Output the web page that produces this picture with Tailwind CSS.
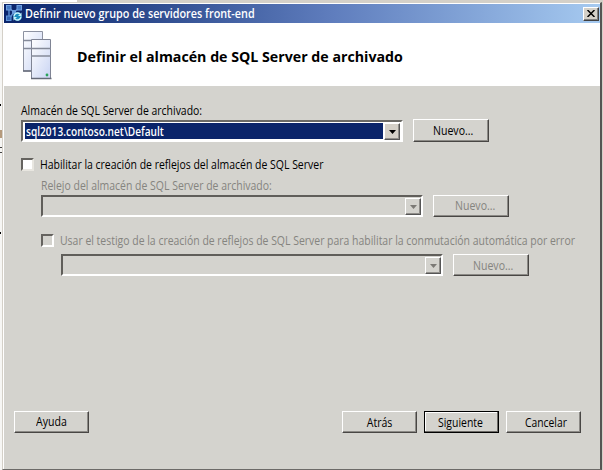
<!DOCTYPE html>
<html lang="es">
<head>
<meta charset="utf-8">
<title>Definir nuevo grupo de servidores front-end</title>
<script src="https://cdn.jsdelivr.net/npm/@tailwindcss/browser@4"></script>
</head>
<body class="w-[603px] h-[470px] overflow-hidden bg-[#d4d0c8] font-['Open_Sans','Noto_Sans',sans-serif] text-[12px] leading-[16px] text-black">
<div class="relative flex w-[603px] h-[470px]">
  <!-- sliver of the window behind -->
  <div class="w-[2px] shrink-0 bg-[#f6f6f4] flex flex-col">
    <div class="mt-[104px] h-[2px] w-px bg-black"></div>
    <div class="mt-[24px] h-[8px] bg-[#b59a7c]"></div>
    <div class="mt-[9px] h-px bg-[#444]"></div>
    <div class="mt-[4px] h-px bg-[#444]"></div>
    <div class="mt-[79px] h-[2px] w-px bg-black"></div>
  </div>
  <div class="absolute left-0 top-0 h-[2px] w-[77px] bg-white"></div>

  <main class="mt-[2px] w-[600px] h-[468px] border-l border-t border-[#d4d0c8] border-r-2 border-r-[#555553] border-b border-b-[#6c6a68] bg-[#d4d3ce] flex flex-col">
    <div class="grow border-l border-t border-white flex flex-col">
      <header class="h-[19px] flex items-center bg-linear-to-r from-[#0a246a] via-[#5f7dbd] via-55% to-[#a6caf0]">
        <svg class="ml-[2px] w-[16px] h-[17px]" viewBox="0 0 16 17">
          <path d="M3 3L8 7L13 3M3 3V14M3 14L8 7" stroke="#5c8fd2" stroke-width="1.400" fill="none"/>
          <rect x=".5" y=".5" width="4.500" height="4.500" fill="#467ac4" stroke="#6e9fdf"/>
          <rect x="11" y=".5" width="4.500" height="4.500" fill="#467ac4" stroke="#6e9fdf"/>
          <rect x=".5" y="11" width="4.500" height="4.500" fill="#3566b2" stroke="#5f93d8"/>
          <rect x="6" y="5" width="4" height="4" fill="#6b9cdc"/>
          <circle cx="11.500" cy="11.500" r="4.300" fill="#1b8fc0"/>
          <path d="M8 11.500A3.500 3.500 0 0 1 14 9M15 11.500A3.500 3.500 0 0 1 9 14" stroke="#c5f2fb" stroke-width="1.500" fill="none"/>
          <path d="M15.500 7.500V11H12ZM7.500 15.500V12H11Z" fill="#c5f2fb"/>
        </svg>
        <h1 class="ml-[3px] grow font-semibold text-white whitespace-nowrap"><span class="inline-block origin-left scale-x-[0.9]">Definir nuevo grupo de servidores front-end</span></h1>
        <button class="mr-[1px] w-[16px] h-[14px] flex items-center justify-center bg-[#d4d0c8] border border-t-white border-l-white border-r-[#404040] border-b-[#404040] shadow-[inset_-1px_-1px_#808080]" aria-label="Cerrar">
          <svg class="w-[8px] h-[7px]" viewBox="0 0 8 7"><path d="M.5 0L7.500 7M7.500 0L.5 7" stroke="#000" stroke-width="1.500"/></svg>
        </button>
      </header>

      <section class="h-[63px] flex items-start bg-white">
        <svg class="ml-[18px] mt-[7px] w-[31px] h-[50px]" viewBox="0 0 31 50">
          <defs><linearGradient id="g" x2="1" y2="1"><stop stop-color="#fff"/><stop offset="1" stop-color="#c9d4f3"/></linearGradient></defs>
          <path d="M1.500 1.500H20.500V41H1.500Z" fill="url(#g)" stroke="#8d92a1"/>
          <path d="M1 10.500H21M1 18.500H21" stroke="#858a99" stroke-width="1.300"/>
          <path d="M1 41H10" stroke="#656a78" stroke-width="1.500"/>
          <path d="M9.500 9.500H28.500V48.500H9.500Z" fill="url(#g)" stroke="#7f8494"/>
          <path d="M9 18.500H29M9 26H29" stroke="#858a99" stroke-width="1.500"/>
          <path d="M9 48.500H29.500" stroke="#656a78" stroke-width="1.500"/>
          <circle cx="25" cy="45" r="1.400" fill="#2aa35a"/>
        </svg>
        <h2 class="ml-[24px] mt-[21px] text-[15px] leading-[24px] font-bold whitespace-nowrap"><span class="inline-block origin-left scale-x-[0.947]">Definir el almacén de SQL Server de archivado</span></h2>
      </section>

      <section class="grow flex flex-col items-start pl-[17px] pt-[16px]">
        <label class="whitespace-nowrap"><span class="inline-block origin-left scale-x-[0.87] translate-y-px">Almacén de SQL Server de archivado:</span></label>
        <div class="mt-[1px] flex items-start">
          <div class="mt-[1px] w-[382px] h-[22px] flex border-2 border-t-[#6b6a66] border-l-[#6b6a66] border-b-white border-r-white bg-white p-[1px]">
            <div class="ml-[1px] w-[358px] h-[16px] bg-[#0a246a] text-white font-semibold leading-[17px] pl-px whitespace-nowrap"><span class="inline-block origin-left scale-x-[0.843]">sql2013.contoso.net\Default</span></div>
            <div class="ml-[1px] w-[16px] h-[17px] flex items-center justify-center bg-[#d4d0c8] border border-t-white border-l-white border-r-[#555] border-b-[#555] shadow-[inset_-1px_-1px_#908e8a]"><svg class="w-[7px] h-[4px]" viewBox="0 0 7 4"><path d="M0 0H7L3.500 4Z"/></svg></div>
          </div>
          <button class="ml-[10px] w-[76px] h-[23px] flex items-center pl-[19px] border border-t-white border-l-white border-r-[#484644] border-b-[#484644] shadow-[inset_-1px_-1px_#8c8a86]"><span class="inline-block origin-left scale-x-[0.88]">Nuevo...</span></button>
        </div>
        <div class="mt-[14px] flex items-center">
          <div class="w-[13px] h-[13px] bg-white border-2 border-t-[#65635f] border-l-[#65635f] border-b-[#e8e6e0] border-r-[#e8e6e0]"></div>
          <span class="ml-[6px] whitespace-nowrap inline-block origin-left scale-x-[0.872] translate-y-px">Habilitar la creación de reflejos del almacén de SQL Server</span>
        </div>
        <div class="mt-[5px] ml-[20px] text-[#85847f] flex flex-col items-start">
          <label class="whitespace-nowrap"><span class="inline-block origin-left scale-x-[0.872] translate-y-px">Relejo del almacén de SQL Server de archivado:</span></label>
          <div class="mt-[2px] flex items-start">
            <div class="w-[382px] h-[22px] flex justify-end border-2 border-t-[#605e5a] border-l-[#605e5a] border-b-white border-r-white pt-px">
              <div class="w-[16px] h-[17px] flex items-center justify-center border border-t-white border-l-white border-r-[#555] border-b-[#555] shadow-[inset_-1px_-1px_#908e8a]"><svg class="w-[7px] h-[4px]" viewBox="0 0 7 4"><path d="M0 0H7L3.500 4Z" fill="#7c7a76"/></svg></div>
            </div>
            <button class="ml-[10px] w-[76px] h-[22px] flex items-center pl-[21px] border border-t-white border-l-white border-r-[#484644] border-b-[#484644] shadow-[inset_-1px_-1px_#8c8a86]"><span class="inline-block origin-left scale-x-[0.88]">Nuevo...</span></button>
          </div>
          <div class="mt-[15px] w-[540px] flex items-center">
            <div class="shrink-0 w-[13px] h-[13px] border-2 border-t-[#65635f] border-l-[#65635f] border-b-white border-r-white"></div>
            <span class="ml-[6px] shrink-0 whitespace-nowrap inline-block origin-left scale-x-[0.871] translate-y-px">Usar el testigo de la creación de reflejos de SQL Server para habilitar la conmutación automática por error</span>
          </div>
          <div class="mt-[6px] ml-[20px] flex items-start">
            <div class="w-[382px] h-[22px] flex justify-end border-2 border-t-[#605e5a] border-l-[#605e5a] border-b-white border-r-white pt-px">
              <div class="w-[16px] h-[17px] flex items-center justify-center border border-t-white border-l-white border-r-[#555] border-b-[#555] shadow-[inset_-1px_-1px_#908e8a]"><svg class="w-[7px] h-[4px]" viewBox="0 0 7 4"><path d="M0 0H7L3.500 4Z" fill="#7c7a76"/></svg></div>
            </div>
            <button class="ml-[10px] w-[76px] h-[22px] flex items-center pl-[19px] border border-t-white border-l-white border-r-[#484644] border-b-[#484644] shadow-[inset_-1px_-1px_#8c8a86]"><span class="inline-block origin-left scale-x-[0.88] translate-y-px">Nuevo...</span></button>
          </div>
        </div>
      </section>

      <footer class="h-[58px] flex items-start pl-[10px]">
        <button class="w-[75px] h-[22px] flex items-center justify-center border border-t-white border-l-white border-r-[#484644] border-b-[#484644] shadow-[inset_-1px_-1px_#8c8a86]"><span class="inline-block scale-x-[0.88]">Ayuda</span></button>
        <button class="ml-[253px] w-[75px] h-[22px] flex items-center justify-center border border-t-white border-l-white border-r-[#484644] border-b-[#484644] shadow-[inset_-1px_-1px_#8c8a86]"><span class="inline-block scale-x-[0.88] translate-y-px">Atrás</span></button>
        <button class="ml-[7px] w-[75px] h-[22px] flex items-center pl-[13px] border border-black shadow-[inset_-1px_-1px_#6c6a66,inset_1px_1px_#fff]"><span class="inline-block origin-left scale-x-[0.87] translate-y-px">Siguiente</span></button>
        <button class="ml-[7px] w-[75px] h-[22px] flex items-center pl-[18px] border border-t-white border-l-white border-r-[#484644] border-b-[#484644] shadow-[inset_-1px_-1px_#8c8a86]"><span class="inline-block origin-left scale-x-[0.86] translate-y-px">Cancelar</span></button>
      </footer>
    </div>
  </main>
</div>
</body>
</html>
